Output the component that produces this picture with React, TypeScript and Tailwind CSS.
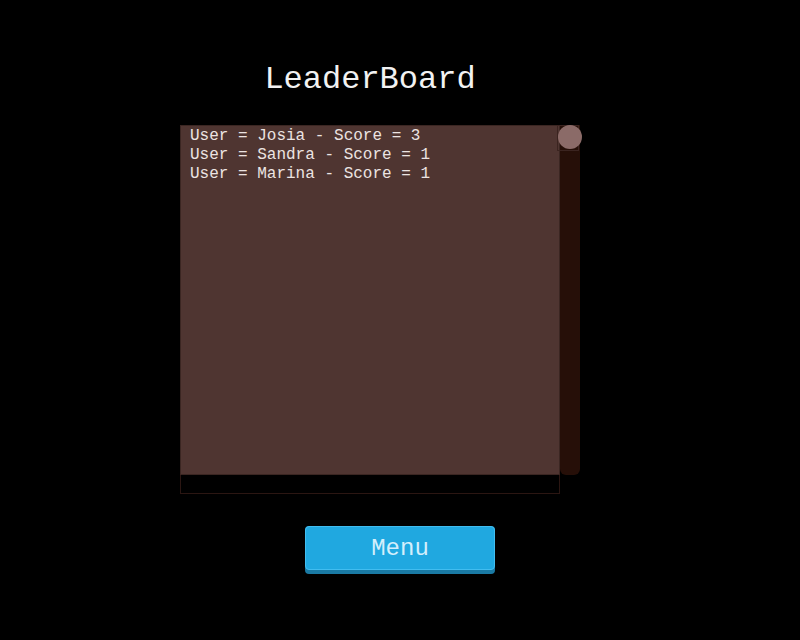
const rows = [
  { user: 'Josia', score: 3 },
  { user: 'Sandra', score: 1 },
  { user: 'Marina', score: 1 },
];

export default function App() {
  return (
    <div className="flex h-[640px] w-[800px] flex-col items-center bg-black font-['Liberation_Mono',monospace]">
      <div className="mt-[60px] grid w-[440px] grid-cols-[380px_20px] grid-rows-[65px_350px_19px] pr-[40px]">
        <h1 className="h-[40px] text-center text-[32px] leading-[40px] text-[#f2f2f2]">LeaderBoard</h1>
        <div />

        <div className="border border-[#3b2622] bg-[#4f3531] px-[9px] pt-[1px]">
          {rows.map((r) => (
            <div key={r.user} className="text-[16px] leading-[19px] whitespace-pre text-[#ece4e2]">
              {`User = ${r.user} - Score = ${r.score}`}
            </div>
          ))}
        </div>

        <div className="relative rounded-b-[6px] bg-[#260f08]">
          <div className="absolute -left-[3px] top-0 h-[26px] w-[22px] border border-[#3b2420]" />
          <div className="absolute -left-[2px] top-0 size-[24px] rounded-full bg-[#8b6b68]" />
        </div>

        <div className="border border-t-0 border-[#2b1612] bg-black" />
        <div />
      </div>

      <button className="mt-[32px] h-[48px] w-[190px] rounded-[4px] bg-[#1a7aa4] pb-[4px]">
        <div className="flex h-full items-center justify-center rounded-[4px] border border-[#41bdf0] bg-[#20a8e0] pt-[2px] text-[24px] text-[#d4effc]">
          Menu
        </div>
      </button>
    </div>
  );
}
